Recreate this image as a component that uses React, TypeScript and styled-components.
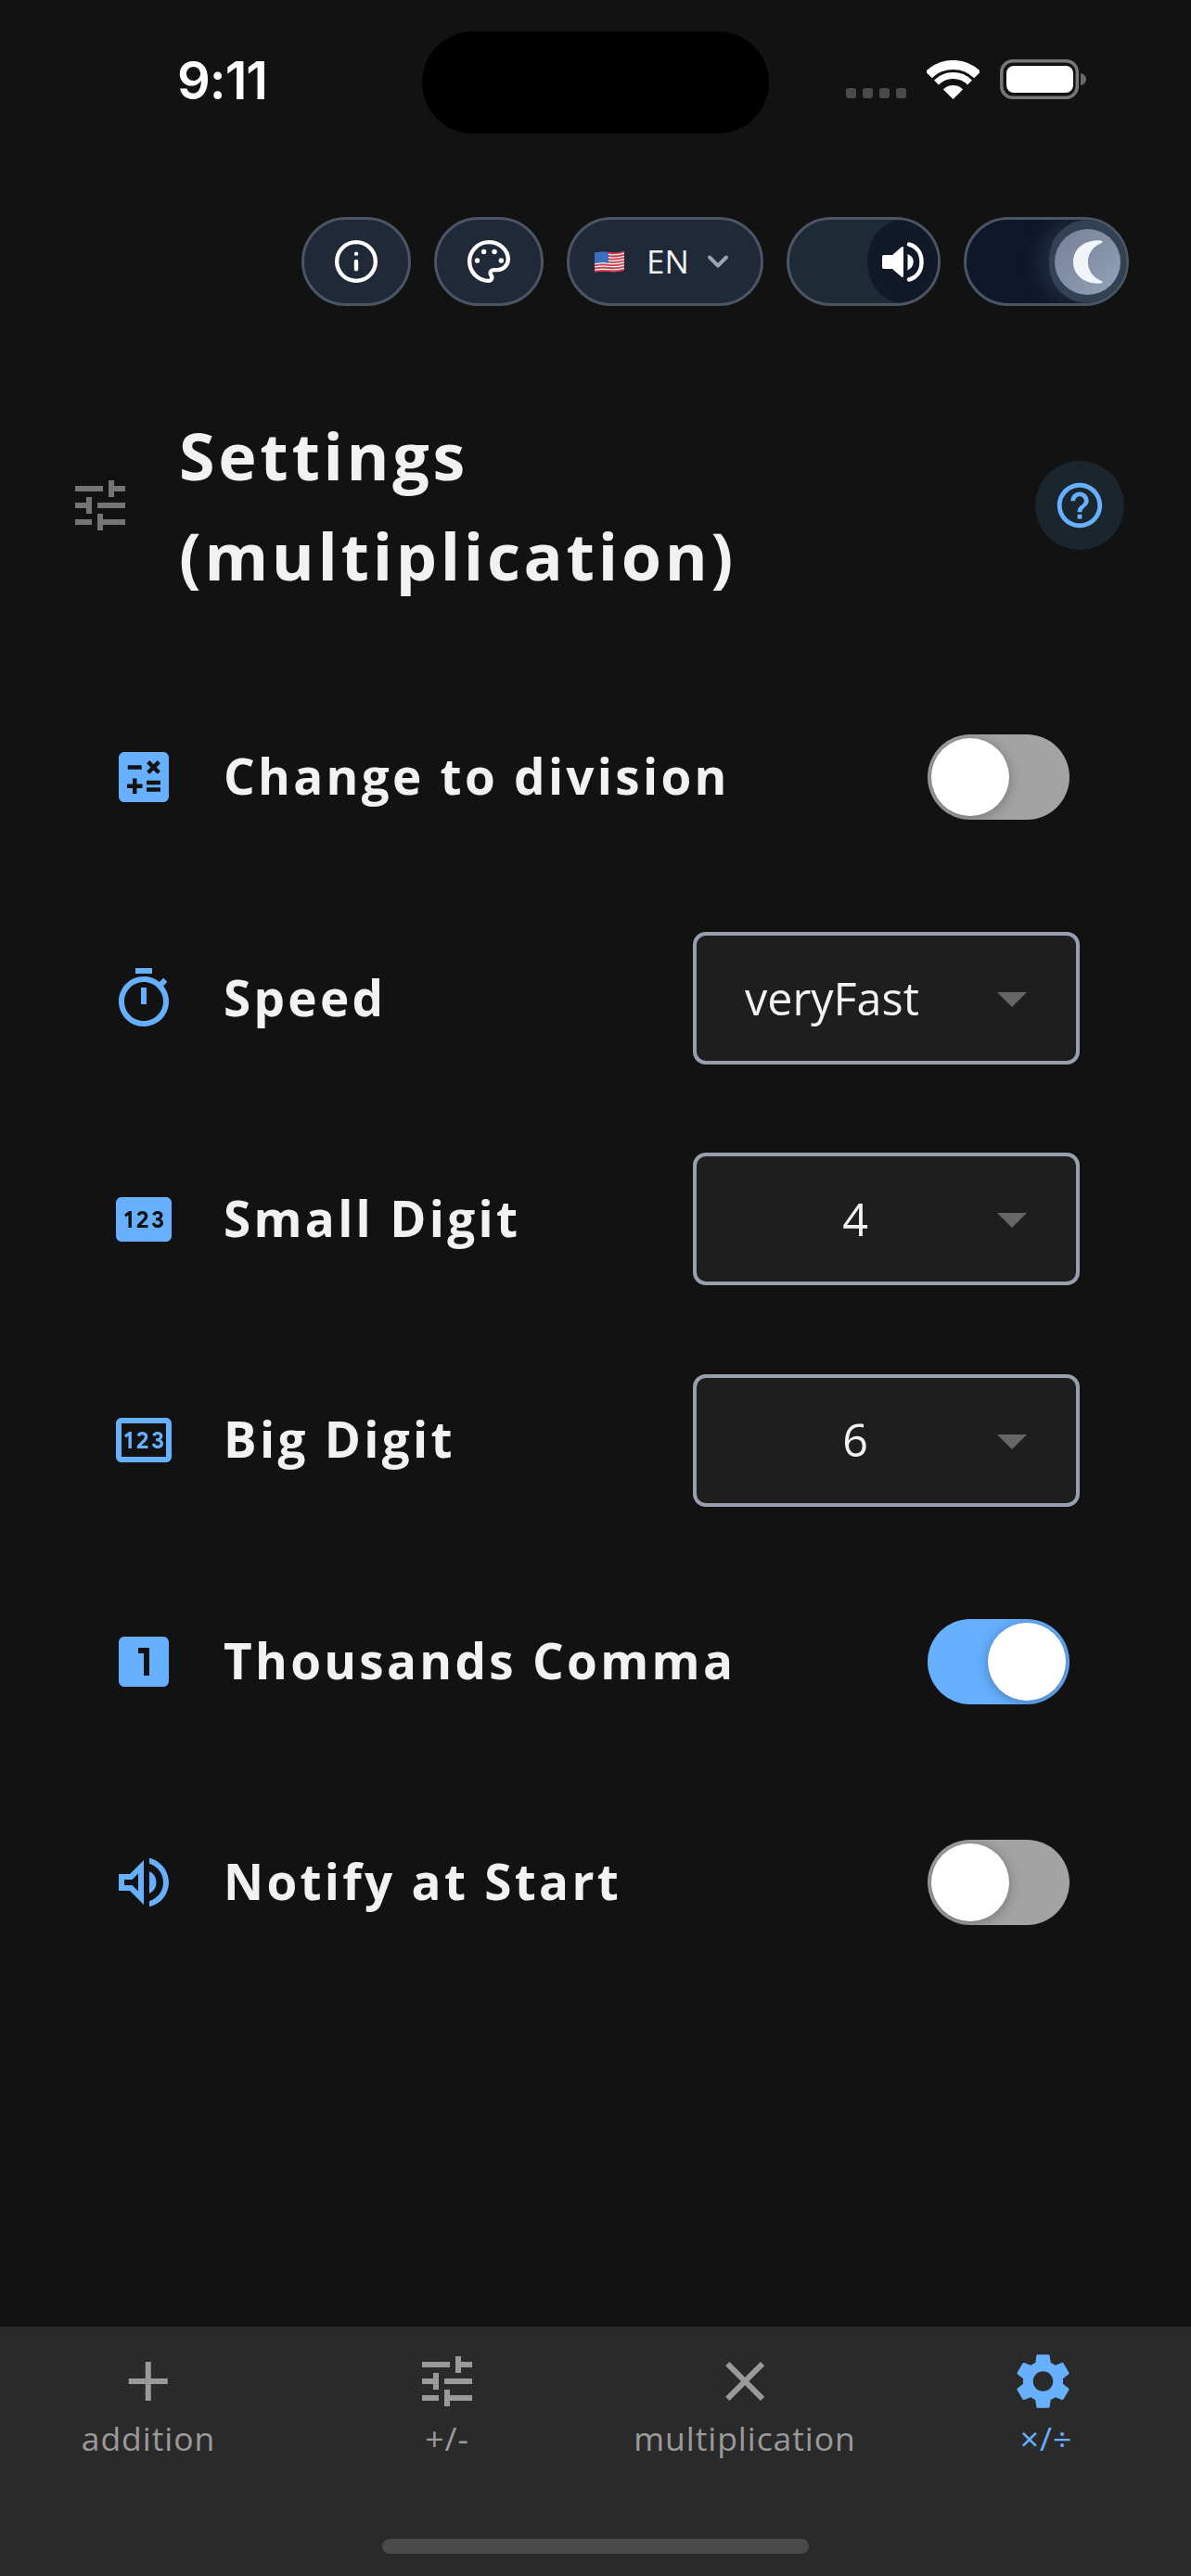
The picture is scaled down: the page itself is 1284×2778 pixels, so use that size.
import React from "react";
import styled, { createGlobalStyle } from "styled-components";
import { Info, ChevronDown } from "lucide-react";
import {
  MdAdd, MdCalculate, MdClose, MdHelpOutline, MdLooksOne, MdOutlinePin, MdOutlineTimer,
  MdOutlineVolumeUp, MdPin, MdSettings, MdTune,
} from "react-icons/md";

const BLUE = "#66b0ff";

const Global = createGlobalStyle`
  html, body { margin: 0; padding: 0; background: #121212; }
  body { font-family: "Open Sans", "Liberation Sans", sans-serif; }
  * { box-sizing: border-box; }
`;

const Page = styled.div`
  width: 1284px; height: 2778px; background: #121212; color: #f2f2f2;
  display: flex; flex-direction: column; overflow: hidden;
`;
const StatusBar = styled.div`
  height: 234px; padding: 34px 0 0 0; display: flex; align-items: flex-start;
`;
const Time = styled.div`
  width: 455px; padding: 21px 0 0 191px; font: 600 56px/64px Inter, "Liberation Sans", sans-serif;
  letter-spacing: -1px; color: #fff;
`;
const Island = styled.div`
  width: 374px; height: 110px; background: #000; border-radius: 55px; flex: none;
`;
const StatusIcons = styled.div`
  display: flex; align-items: flex-end; padding: 30px 0 0 83px; gap: 22px;
`;
const SignalDots = styled.svg`
  margin-bottom: 1px;
`;
const Toolbar = styled.div`
  display: flex; justify-content: flex-end; gap: 25px; padding-right: 67px; height: 96px;
`;
const Pill = styled.div<{ $w: number }>`
  width: ${(p) => p.$w}px; height: 96px; border-radius: 48px; background: #1f2937; flex: none;
  border: 3px solid #4b5563; display: flex; align-items: center; justify-content: center; color: #fff;
`;
const Lang = styled(Pill)`
  font-size: 35px; line-height: 48px; color: #f3f4f6; justify-content: flex-start; padding-left: 27px;
`;
const LangText = styled.span`
  margin: 0 13px 0 24px;
`;
const Chev = styled(ChevronDown)`
  color: #9ca3af; flex: none;
`;
const SwitchPill = styled.div<{ $w: number; $bg: string }>`
  position: relative; width: ${(p) => p.$w}px; height: 96px; border-radius: 48px; background: ${(p) => p.$bg};
  border: 3px solid #4b5563; overflow: hidden; flex: none;
`;
const SoundThumb = styled.div`
  position: absolute; right: 0; top: 0; width: 76px; height: 90px; border-radius: 38px 0 0 38px / 45px 45px 45px 45px; background: #111827;
  display: flex; align-items: center; justify-content: center; color: #fff;
`;
const MoonHalo = styled.div`
  position: absolute; right: 0; top: 0; width: 83px; height: 90px; border-radius: 45px; background: #334155;
  box-shadow: -10px 0 20px rgba(51, 65, 85, 0.5);
  display: flex; align-items: center; justify-content: center;
`;
const MoonKnob = styled.div`
  width: 71px; height: 71px; border-radius: 50%; background: linear-gradient(135deg, #748097, #94a3b8); flex: none;
  display: flex; align-items: center; justify-content: center;
`;
const Header = styled.div`
  margin-top: 107px; min-height: 216px; display: flex; align-items: center; padding: 0 72px 0 72px;
`;
const HeaderIcon = styled(MdTune)`
  color: #757575; flex: none;
`;
const Title = styled.h1`
  margin: 0 0 0 49px; flex: 1; font-size: 70px; line-height: 108px; font-weight: 700; letter-spacing: 3.7px; color: #f2f2f2;
`;
const HelpButton = styled.div`
  width: 96px; height: 96px; border-radius: 50%; background: #1b252e;
  display: flex; align-items: center; justify-content: center; color: ${BLUE}; flex: none;
`;
const List = styled.div`
  margin-top: 66px; display: flex; flex-direction: column; padding: 0 120px 0 119px;
`;
const Row = styled.div`
  height: 238.4px; display: flex; align-items: center; gap: 50px;
`;
const RowIcon = styled.div`
  width: 72px; height: 72px; color: ${BLUE}; flex: none; display: flex;
`;
const Label = styled.div`
  flex: 1; font-size: 53px; line-height: 72px; margin-top: -2px; font-weight: 700; letter-spacing: 3.3px; color: #f2f2f2;
`;
const Select = styled.div<{ $center?: boolean }>`
  position: relative; width: 417px; height: 143px; background: #1e1e1e; border: 4px solid #98a0b0; border-radius: 14px;
  display: flex; align-items: center; font-size: 48.5px; color: #f2f2f2; flex: none;
  padding-left: ${(p) => (p.$center ? "0" : "52px")};
  padding-right: ${(p) => (p.$center ? "67px" : "0")};
  padding-bottom: 2px;
  justify-content: ${(p) => (p.$center ? "center" : "flex-start")};
`;
const Arrow = styled.div`
  position: absolute; right: 53px; top: 61px; width: 0; height: 0;
  border-left: 16px solid transparent; border-right: 16px solid transparent; border-top: 16px solid #666;
`;
const Track = styled.div<{ $on?: boolean }>`
  position: relative; width: 153px; height: 92px; margin-right: 11px; border-radius: 46px; flex: none;
  background: ${(p) => (p.$on ? BLUE : "#a3a3a3")};
  overflow: hidden;
`;
const Knob = styled.div<{ $on?: boolean }>`
  position: absolute; top: 4px; width: 84px; height: 84px; border-radius: 50%; background: #fff;
  ${(p) => (p.$on ? "right: 4px;" : "left: 4px;")}
  box-shadow: 0 2px 14px rgba(0, 0, 0, 0.3);
`;
const Spacer = styled.div`
  flex: 1;
`;
const TabBar = styled.div`
  position: relative; height: 269px; flex: none; background: #2a2a2a;
`;
const Tab = styled.div<{ $x: number; $active?: boolean }>`
  position: absolute; left: ${(p) => p.$x}px; top: 23px; transform: translateX(-50%);
  display: flex; flex-direction: column; align-items: center; white-space: nowrap;
  color: ${(p) => (p.$active ? BLUE : "#9a9a9a")};
`;
const TabIcon = styled.div<{ $shift?: number }>`
  display: flex; height: 72px; margin-right: ${(p) => p.$shift ?? 0}px;
`;
const TabLabel = styled.span`
  font-size: 35.5px; line-height: 48px; margin-top: 1px; letter-spacing: 0.95px;
`;
const HomeBar = styled.div`
  position: absolute; left: 412px; bottom: 24px; width: 460px; height: 16px; border-radius: 8px; background: #4a4a4a;
`;

const Flag = () => (
  <svg width="32" height="24" viewBox="0 0 32 24" fill="none">
    {Array.from({ length: 7 }).map((_, i) => (
      <path key={`r${i}`} d={`M0 ${3.5 + i * 3.2} Q8 ${2 + i * 3.2} 16 ${3 + i * 3.2} T32 ${1.5 + i * 3.2}`} stroke="#e0394a" strokeWidth="1.8" />
    ))}
    {Array.from({ length: 6 }).map((_, i) => (
      <path key={`w${i}`} d={`M0 ${5.1 + i * 3.2} Q8 ${3.6 + i * 3.2} 16 ${4.6 + i * 3.2} T32 ${3.1 + i * 3.2}`} stroke="#f4f4f4" strokeWidth="1.4" />
    ))}
    <path d="M0 2.600Q8 1 15 2V13.500Q8 12.500 0 14z" fill="#3d6fc0" />
  </svg>
);

const Toggle = ({ on }: { on?: boolean }) => (
  <Track $on={on}>
    <Knob $on={on} />
  </Track>
);

const tabs = [
  { x: 160, label: "addition", Icon: MdAdd },
  { x: 482, label: "+/-", Icon: MdTune },
  { x: 803, label: "multiplication", Icon: MdClose },
  { x: 1128, label: "×/÷", Icon: MdSettings, active: true, shift: 7 },
];

export default function App() {
  return (
    <Page>
      <Global />
      <StatusBar>
        <Time>9:11</Time>
        <Island />
        <StatusIcons>
          <SignalDots width="65" height="11" viewBox="0 0 65 11" fill="#4a4a4a">
            <rect x="0" width="11" height="11" rx="3" />
            <rect x="18" width="11" height="11" rx="3" />
            <rect x="36" width="11" height="11" rx="3" />
            <rect x="54" width="11" height="11" rx="3" />
          </SignalDots>
          <svg width="57" height="42" viewBox="0 0 57 42">
            <path d="M2.300 15.800A37 37 0 0 1 54.700 15.800" fill="none" stroke="#fff" strokeWidth="10" />
            <path d="M10.500 24A25.500 25.500 0 0 1 46.500 24" fill="none" stroke="#fff" strokeWidth="7" />
            <path d="M28.500 42L17.900 31.400A15 15 0 0 1 39.100 31.400z" fill="#fff" />
          </svg>
          <svg width="93" height="43" viewBox="0 0 93 43">
            <rect x="1.800" y="1.800" width="81.500" height="39.500" rx="12" fill="none" stroke="#777" strokeWidth="3.500" />
            <rect x="7" y="7" width="72" height="29" rx="8" fill="#fff" />
            <path d="M87 15c3.500.6 6 3.200 6 6.500s-2.500 5.900-6 6.500z" fill="#6a6a6a" />
          </svg>
        </StatusIcons>
      </StatusBar>

      <Toolbar>
        <Pill $w={118}><Info size={50} strokeWidth={2.1} /></Pill>
        <Pill $w={118}>
          <svg width="50" height="50" viewBox="0 0 24 24" fill="none" stroke="currentColor" strokeWidth="2.1" strokeLinejoin="round">
            <path d="M12 2C6.500 2 2 6.500 2 12s4.500 10 10 10c.926 0 1.648-.746 1.648-1.688 0-.437-.18-.835-.437-1.125-.29-.289-.438-.652-.438-1.125a1.640 1.640 0 0 1 1.668-1.668h1.996c3.051 0 5.555-2.503 5.555-5.554C21.965 6.012 17.461 2 12 2z" />
            <circle cx="9.400" cy="7" r="1.300" fill="currentColor" stroke="none" />
            <circle cx="14.900" cy="7" r="1.300" fill="currentColor" stroke="none" />
            <circle cx="6" cy="11.500" r="1.300" fill="currentColor" stroke="none" />
            <circle cx="18.400" cy="11.500" r="1.300" fill="currentColor" stroke="none" />
          </svg>
        </Pill>
        <Lang $w={212}>
          <Flag />
          <LangText>EN</LangText>
          <Chev size={36} strokeWidth={2.6} />
        </Lang>
        <SwitchPill $w={166} $bg="#1f2a37">
          <SoundThumb>
            <svg width="45" height="43" viewBox="0 0 45 43" fill="#fff">
              <path d="M0 16a2 2 0 0 1 2-2h9L20.500 5.800c1.500-1.300 2.500-.8 2.500 1V36.200c0 1.800-1 2.300-2.500 1L11 29H2a2 2 0 0 1-2-2z" />
              <path d="M27.500 13c4 1.500 6.200 4.500 6.200 8.500s-2.200 7-6.200 9z" />
              <path d="M29 2.500C38 5 42.500 12.500 42.500 21.500S38 38 29 40.500" fill="none" stroke="#fff" strokeWidth="4.500" strokeLinecap="round" />
            </svg>
          </SoundThumb>
        </SwitchPill>
        <SwitchPill $w={178} $bg="#0f172a">
          <MoonHalo>
            <MoonKnob>
              <svg width="32" height="49" viewBox="0 0 34 50" preserveAspectRatio="none" fill="#f1f5f9">
                <path d="M32 1.500C14 0 0 10 0 25s14 25 32 23.500c1.800-.2 2-2 .4-2.700C22 41.500 17 34 17 25S22 8.500 32.400 4.200c1.600-.7 1.400-2.500-.4-2.700z" />
              </svg>
            </MoonKnob>
          </MoonHalo>
        </SwitchPill>
      </Toolbar>

      <Header>
        <HeaderIcon size={72} />
        <Title>Settings<br />(multiplication)</Title>
        <HelpButton><MdHelpOutline size={58} /></HelpButton>
      </Header>

      <List>
        <Row>
          <RowIcon><MdCalculate size={72} /></RowIcon>
          <Label>Change to division</Label>
          <Toggle />
        </Row>
        <Row>
          <RowIcon><MdOutlineTimer size={72} /></RowIcon>
          <Label>Speed</Label>
          <Select>veryFast<Arrow /></Select>
        </Row>
        <Row>
          <RowIcon><MdPin size={72} /></RowIcon>
          <Label>Small Digit</Label>
          <Select $center>4<Arrow /></Select>
        </Row>
        <Row>
          <RowIcon><MdOutlinePin size={72} /></RowIcon>
          <Label>Big Digit</Label>
          <Select $center>6<Arrow /></Select>
        </Row>
        <Row>
          <RowIcon><MdLooksOne size={72} /></RowIcon>
          <Label>Thousands Comma</Label>
          <Toggle on />
        </Row>
        <Row>
          <RowIcon><MdOutlineVolumeUp size={72} /></RowIcon>
          <Label>Notify at Start</Label>
          <Toggle />
        </Row>
      </List>

      <Spacer />

      <TabBar>
        {tabs.map(({ x, label, Icon, active, shift }) => (
          <Tab key={label} $x={x} $active={active}>
            <TabIcon $shift={shift}><Icon size={72} /></TabIcon>
            <TabLabel>{label}</TabLabel>
          </Tab>
        ))}
        <HomeBar />
      </TabBar>
    </Page>
  );
}
